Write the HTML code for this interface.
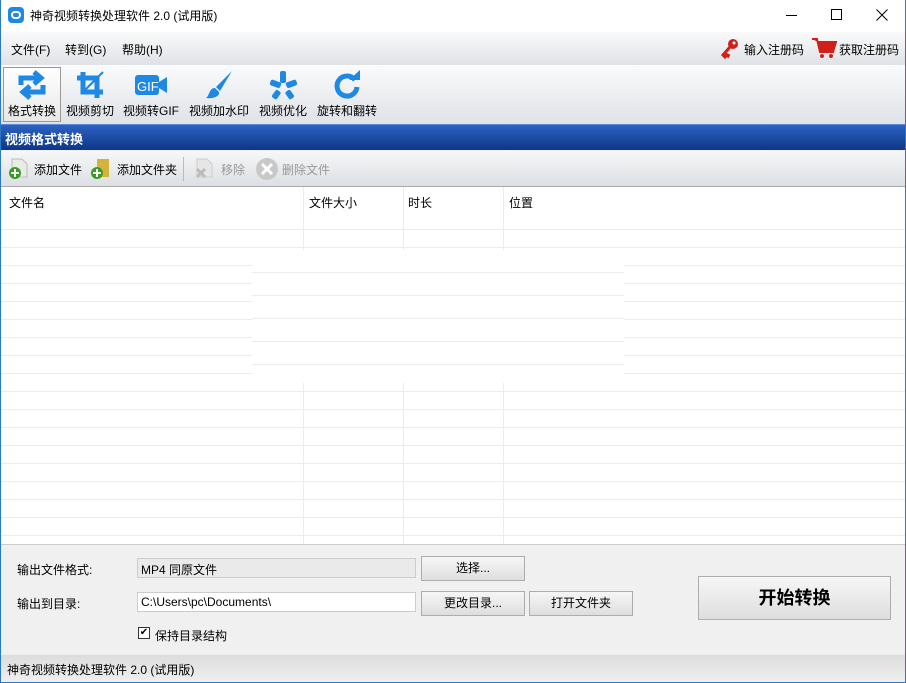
<!DOCTYPE html>
<html><head><meta charset="utf-8"><style>
*{margin:0;padding:0;box-sizing:border-box}
body{width:906px;height:683px;overflow:hidden;font-family:"Liberation Sans","Noto Sans CJK SC",sans-serif;font-size:12px;color:#000;background:#f0f0f0;position:relative}
.a{position:absolute}
#win{position:absolute;left:0;top:0;width:906px;height:683px;border:1px solid #2b79c2;border-top:none}
.btn{position:absolute;background:linear-gradient(#f6f6f6,#dedede);border:1px solid #adadad;text-align:center;font-size:12px}
.tb{position:absolute;top:66px;height:56px;text-align:center;font-size:12px}
.tb svg{display:block;margin:4px auto 2px}
</style></head><body>
<div class="a" style="left:0;top:0;width:906px;height:32px;background:#fff"></div>
<div class="a" style="left:8px;top:7px;width:16px;height:16px;border-radius:4px;background:#1e88e5"><div class="a" style="left:3px;top:4px;width:10px;height:8px;border:2px solid #fff;border-radius:4px"></div></div>
<div class="a" style="left:30px;top:7px;font-size:12px">神奇视频转换处理软件 2.0 (试用版)</div>
<div class="a" style="left:786px;top:15px;width:11px;height:1px;background:#000"></div>
<div class="a" style="left:831px;top:9px;width:11px;height:11px;border:1px solid #000"></div>
<svg class="a" style="left:876px;top:9px" width="12" height="12"><path d="M0.5 0.5 L11.5 11.5 M11.5 0.5 L0.5 11.5" stroke="#000" stroke-width="1"/></svg>
<div class="a" style="left:0;top:32px;width:906px;height:33px;background:linear-gradient(#fafafa,#dfe2e6)"></div>
<div class="a" style="left:11px;top:41px">文件(F)</div>
<div class="a" style="left:65px;top:41px">转到(G)</div>
<div class="a" style="left:122px;top:41px">帮助(H)</div>
<svg class="a" style="left:720px;top:37px" width="20" height="22" viewBox="0 0 20 22"><circle cx="13" cy="7" r="5" fill="#d0201a"/><circle cx="14" cy="6" r="1.5" fill="#fff"/><path d="M10 10 L3 18 L5 20 L7 18 L8 19 L9 17" stroke="#d0201a" stroke-width="3" fill="none"/></svg>
<div class="a" style="left:744px;top:41px">输入注册码</div>
<svg class="a" style="left:811px;top:36px" width="26" height="24" viewBox="0 0 26 24"><path d="M1 3 H6 L9 16 H22 L25 6 H7" fill="#d0201a" stroke="#d0201a" stroke-width="2"/><circle cx="11" cy="20" r="2" fill="#d0201a"/><circle cx="20" cy="20" r="2" fill="#d0201a"/></svg>
<div class="a" style="left:839px;top:41px">获取注册码</div>
<div class="a" style="left:0;top:65px;width:906px;height:59px;background:linear-gradient(#fafbfc,#dfe2e6)"></div>
<div class="a" style="left:3px;top:67px;width:58px;height:55px;border:1px solid #999;background:linear-gradient(#fff,#e8e8e8)"></div>
<div class="tb" style="left:3px;width:58px"><svg width="30" height="30" viewBox="0 0 30 30"><path d="M4 15 V8 H22 M17 2 L24 8 L17 14 M26 15 V22 H8 M13 16 L6 22 L13 28" stroke="#1e88e5" stroke-width="5" fill="none"/></svg>格式转换</div>
<div class="tb" style="left:64px;width:52px"><svg width="30" height="30" viewBox="0 0 30 30"><path d="M8 2 V22 H28 M2 8 H22 V28" stroke="#1e88e5" stroke-width="5" fill="none"/><path d="M8 22 L28 2" stroke="#1e88e5" stroke-width="2"/></svg>视频剪切</div>
<div class="tb" style="left:120px;width:62px"><svg width="34" height="30" viewBox="0 0 34 30"><rect x="1" y="5" width="24" height="20" rx="3" fill="#1e88e5"/><path d="M25 12 L33 7 V23 L25 18Z" fill="#1e88e5"/><text x="3" y="21" fill="#fff" font-size="13" font-family="Liberation Sans">GIF</text></svg>视频转GIF</div>
<div class="tb" style="left:187px;width:64px"><svg width="30" height="30" viewBox="0 0 30 30"><path d="M28 1 L12 17 L16 21 Z" fill="#1e88e5"/><path d="M11 18 C5 18 6 25 2 28 C10 29 16 26 15 22Z" fill="#1e88e5"/></svg>视频加水印</div>
<div class="tb" style="left:256px;width:54px"><svg width="30" height="30" viewBox="0 0 30 30"><g fill="#1e88e5"><rect x="12" y="1" width="6" height="12" rx="2"/><rect x="2" y="11" width="11" height="6" rx="2" transform="rotate(20 8 14)"/><rect x="18" y="11" width="11" height="6" rx="2" transform="rotate(-20 23 14)"/><rect x="5" y="20" width="6" height="9" rx="2" transform="rotate(35 8 25)"/><rect x="19" y="20" width="6" height="9" rx="2" transform="rotate(-35 22 25)"/></g></svg>视频优化</div>
<div class="tb" style="left:314px;width:66px"><svg width="30" height="30" viewBox="0 0 30 30"><path d="M23 10 A10 10 0 1 0 25 17" stroke="#1e88e5" stroke-width="5" fill="none"/><path d="M17 10 H28 V0Z" fill="#1e88e5"/></svg>旋转和翻转</div>
<div class="a" style="left:0;top:124px;width:906px;height:26px;background:linear-gradient(#2c62c2,#0d3787);border-top:1px solid #5a8ad8"></div>
<div class="a" style="left:5px;top:129px;color:#fff;font-weight:bold;font-size:13px">视频格式转换</div>
<div class="a" style="left:0;top:151px;width:906px;height:35px;background:linear-gradient(#f6f7f8,#dcdfe3)"></div>
<svg class="a" style="left:7px;top:157px" width="24" height="24"><path d="M5 2 H15 L20 7 V20 H5Z" fill="#e8ece8" stroke="#bbb"/><circle cx="8" cy="16" r="6" fill="#3a9d23"/><path d="M8 12 V20 M4 16 H12" stroke="#fff" stroke-width="2"/></svg>
<div class="a" style="left:34px;top:161px">添加文件</div>
<svg class="a" style="left:89px;top:157px" width="24" height="24"><path d="M8 2 H20 V20 H8Z" fill="#d4b33a"/><circle cx="8" cy="16" r="6" fill="#3a9d23"/><path d="M8 12 V20 M4 16 H12" stroke="#fff" stroke-width="2"/></svg>
<div class="a" style="left:117px;top:161px">添加文件夹</div>
<div class="a" style="left:183px;top:157px;width:1px;height:24px;background:#bbb"></div>
<svg class="a" style="left:192px;top:157px" width="24" height="24"><path d="M5 2 H15 L20 7 V20 H5Z" fill="#e6e6e6" stroke="#ccc"/><path d="M5 12 L13 20 M13 12 L5 20" stroke="#bbb" stroke-width="3"/></svg>
<div class="a" style="left:221px;top:161px;color:#999">移除</div>
<svg class="a" style="left:255px;top:157px" width="24" height="24"><circle cx="12" cy="12" r="11" fill="#c8c8c8"/><path d="M7 7 L17 17 M17 7 L7 17" stroke="#fff" stroke-width="3"/></svg>
<div class="a" style="left:282px;top:161px;color:#999">删除文件</div>
<div class="a" style="left:1px;top:186px;width:904px;height:359px;background:#fff;border-top:1px solid #aaa;border-bottom:1px solid #ccc;
background-image:repeating-linear-gradient(#fff 0,#fff 17px,#ececec 17px,#ececec 18px);background-position:0 25px"></div>
<div class="a" style="left:1px;top:187px;width:904px;height:42px;background:#fff"></div>
<div class="a" style="left:1px;top:229px;width:904px;height:1px;background:#ececec"></div>
<div class="a" style="left:303px;top:187px;width:1px;height:357px;background:#ececec"></div>
<div class="a" style="left:403px;top:187px;width:1px;height:357px;background:#ececec"></div>
<div class="a" style="left:503px;top:187px;width:1px;height:357px;background:#ececec"></div>
<div class="a" style="left:252px;top:250px;width:372px;height:133px;background:#fff;background-image:repeating-linear-gradient(#fff 0,#fff 22px,#ececec 22px,#ececec 23px)"></div>
<div class="a" style="left:9px;top:194px">文件名</div>
<div class="a" style="left:309px;top:194px">文件大小</div>
<div class="a" style="left:408px;top:194px">时长</div>
<div class="a" style="left:509px;top:194px">位置</div>
<div class="a" style="left:17px;top:561px">输出文件格式:</div>
<div class="a" style="left:17px;top:595px">输出到目录:</div>
<div class="a" style="left:137px;top:558px;width:279px;height:20px;background:#eaeaea;border:1px solid #ccc;padding:2px 3px">MP4 同原文件</div>
<div class="a" style="left:137px;top:592px;width:279px;height:20px;background:#fff;border:1px solid #ccc;padding:2px 3px">C:\Users\pc\Documents\</div>
<div class="btn" style="left:421px;top:556px;width:104px;height:25px;line-height:23px">选择...</div>
<div class="btn" style="left:421px;top:591px;width:104px;height:25px;line-height:23px">更改目录...</div>
<div class="btn" style="left:529px;top:591px;width:104px;height:25px;line-height:23px">打开文件夹</div>
<div class="btn" style="left:698px;top:576px;width:193px;height:44px;line-height:42px;font-size:18px;font-weight:bold">开始转换</div>
<div class="a" style="left:138px;top:627px;width:12px;height:12px;border:1px solid #333;background:#fff;font-size:10px;line-height:10px;text-align:center">✔</div>
<div class="a" style="left:155px;top:627px">保持目录结构</div>
<div class="a" style="left:0;top:655px;width:906px;height:28px;background:linear-gradient(#dcdcdc,#f0f0f0)"></div>
<div class="a" style="left:7px;top:661px">神奇视频转换处理软件 2.0 (试用版)</div>
<div id="win"></div>
</body></html>
